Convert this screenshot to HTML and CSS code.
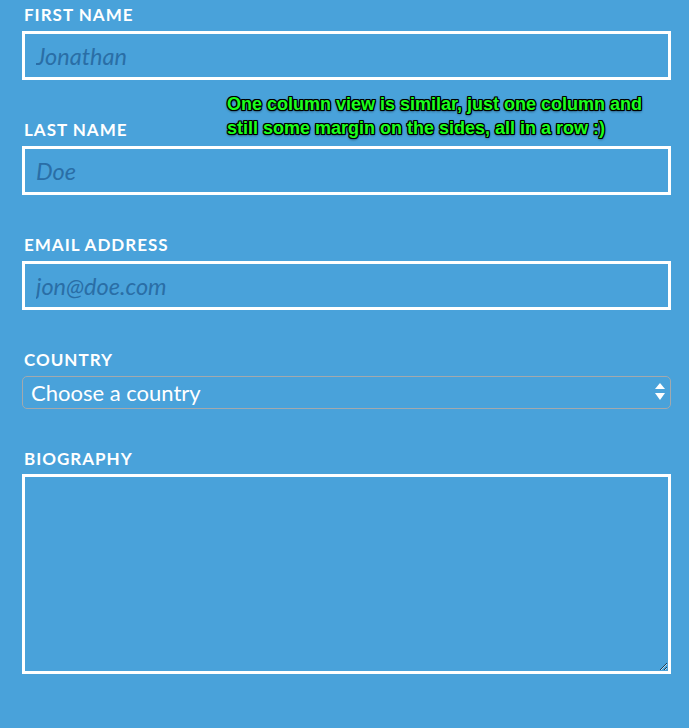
FILE: index.html
```html
<!DOCTYPE html>
<html>
<head>
<meta charset="utf-8">
<link rel="stylesheet" href="styles.css">
</head>
<body>
<form class="form">
  <div class="field">
    <label class="label">First Name</label>
    <input class="input" type="text" placeholder="Jonathan">
  </div>
  <div class="field">
    <label class="label">Last Name</label>
    <input class="input" type="text" placeholder="Doe">
  </div>
  <div class="field">
    <label class="label">Email Address</label>
    <input class="input" type="text" placeholder="jon@doe.com">
  </div>
  <div class="field">
    <label class="label">Country</label>
    <div class="select-wrap">
      <select class="select">
        <option>Choose a country</option>
      </select>
      <svg class="arrows" width="10" height="18" viewBox="0 0 10 18">
        <polygon points="5,0 10,6 0,6" fill="#fff"/>
        <polygon points="0,10 10,10 5,17" fill="#fff"/>
      </svg>
    </div>
  </div>
  <div class="field field-bio">
    <label class="label">Biography</label>
    <textarea class="textarea"></textarea>
  </div>
</form>
<div class="note">One column view is similar, just one column and<br>still some margin on the sides, all in a row :)</div>
</body>
</html>
```

FILE: styles.css
```css
html, body {
  margin: 0;
  padding: 0;
}
body {
  background: #49a2da;
  font-family: Lato, "Open Sans", sans-serif;
  width: 689px;
  height: 728px;
  overflow: hidden;
  position: relative;
}
.form {
  display: flex;
  flex-direction: column;
  padding: 5px 0 0 22px;
  width: 649px;
}
.field {
  display: flex;
  flex-direction: column;
  gap: 6px;
  margin-bottom: 40px;
}
.field-bio {
  gap: 5px;
}
.label {
  display: block;
  color: #fff;
  font-weight: 700;
  font-size: 17px;
  line-height: 20px;
  letter-spacing: 1px;
  text-transform: uppercase;
  padding-left: 2px;
}
.input {
  box-sizing: border-box;
  width: 649px;
  height: 49px;
  border: 3px solid #fff;
  background: transparent;
  padding: 0 11px;
  font-family: Lato, sans-serif;
  font-style: italic;
  font-size: 23.5px;
  color: #fff;
  outline: none;
  margin: 0;
}
.input::placeholder {
  color: #2a6ea6;
  opacity: 1;
}
.select-wrap {
  position: relative;
  width: 649px;
  height: 33px;
}
.select {
  appearance: none;
  -webkit-appearance: none;
  box-sizing: border-box;
  width: 649px;
  height: 33px;
  border: 1px solid #a3a9ad;
  border-radius: 5px;
  background: transparent;
  color: #fff;
  font-family: Lato, sans-serif;
  font-size: 22px;
  padding: 0 0 0 8px;
  outline: none;
  margin: 0;
}
.arrows {
  position: absolute;
  right: 6px;
  top: 7px;
}
.textarea {
  box-sizing: border-box;
  width: 649px;
  height: 200px;
  border: 3px solid #fff;
  background: transparent;
  outline: none;
  margin: 0;
}
.note {
  position: absolute;
  left: 227px;
  top: 92px;
  font-family: "Liberation Sans", Arial, sans-serif;
  font-weight: 700;
  font-size: 18px;
  line-height: 24px;
  color: #1cff1c;
  text-shadow: 1px 0 0 #000, -1px 0 0 #000, 0 1px 0 #000, 0 -1px 0 #000, 1px 1px 0 #000, -1px -1px 0 #000, 1px -1px 0 #000, -1px 1px 0 #000, 0 1px 3px #000;
}
```
